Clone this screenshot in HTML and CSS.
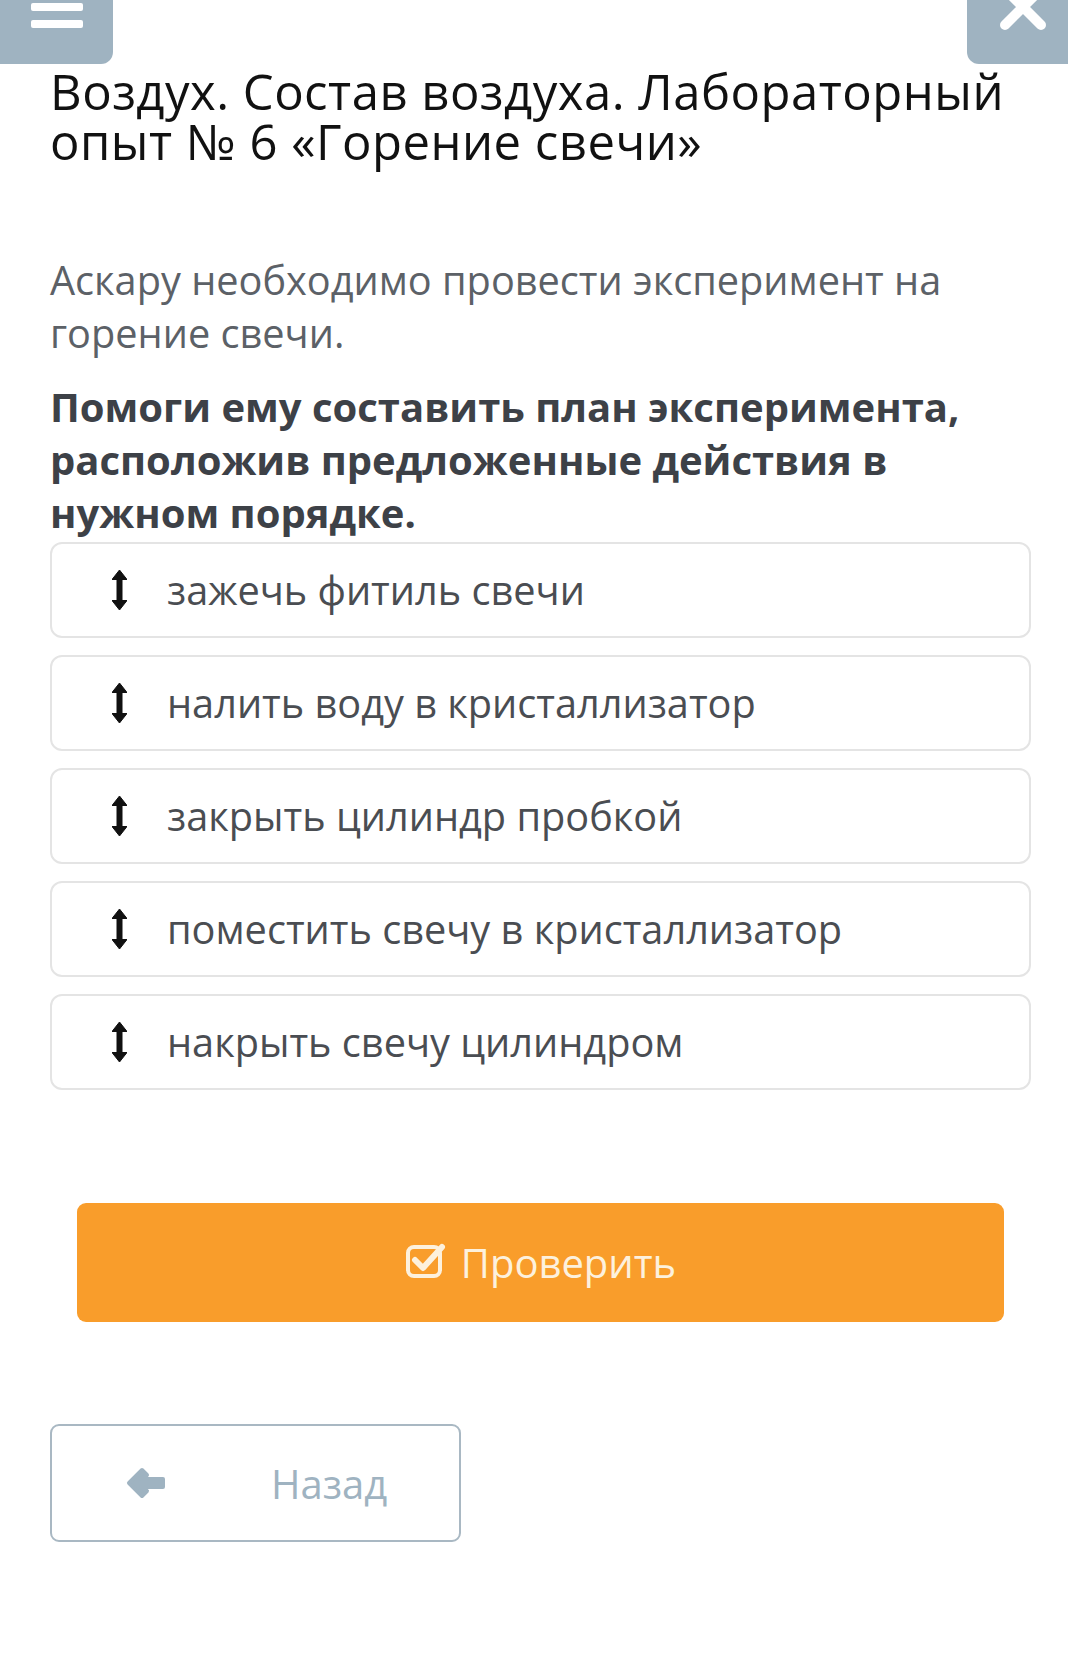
FILE: index.html
```html
<!DOCTYPE html>
<html lang="ru">

<head>
    <meta charset="UTF-8">
    <meta name="viewport" content="width=device-width, initial-scale=1.0">
    <title>Горение свечи</title>
    <link rel="stylesheet" href="styles.css">
</head>

<body>
    <header class="topbar">
        <button class="menu-btn" aria-label="Меню">
            <svg width="52" height="30" viewBox="0 0 52 30">
                <rect x="0" y="2" width="52" height="8" rx="2" fill="#fff" />
                <rect x="0" y="19" width="52" height="8" rx="2" fill="#fff" />
            </svg>
        </button>
        <button class="close-btn" aria-label="Закрыть">
            <svg width="46" height="34" viewBox="0 0 46 34">
                <path d="M5 -11 L41 25 M41 -11 L5 25" stroke="#fff" stroke-width="10" stroke-linecap="round" />
            </svg>
        </button>
    </header>

    <main class="page">
        <h1 class="title">Воздух. Состав воздуха. Лабораторный опыт № 6 «Горение свечи»</h1>

        <p class="task">Аскару необходимо провести эксперимент на горение свечи.</p>
        <p class="task-bold">Помоги ему составить план эксперимента, расположив предложенные действия в нужном порядке.</p>

        <ul class="order-list">
            <li class="order-item">
                <svg class="drag-icon" width="15" height="40" viewBox="0 0 15 40">
                    <path d="M7.5 0 L15 9.5 L10 9.5 L10 30.5 L15 30.5 L7.5 40 L0 30.5 L5 30.5 L5 9.5 L0 9.5 Z" fill="#111" stroke="#111" stroke-width="1" stroke-linejoin="round" />
                </svg>
                <span>зажечь фитиль свечи</span>
            </li>
            <li class="order-item">
                <svg class="drag-icon" width="15" height="40" viewBox="0 0 15 40">
                    <path d="M7.5 0 L15 9.5 L10 9.5 L10 30.5 L15 30.5 L7.5 40 L0 30.5 L5 30.5 L5 9.5 L0 9.5 Z" fill="#111" stroke="#111" stroke-width="1" stroke-linejoin="round" />
                </svg>
                <span>налить воду в кристаллизатор</span>
            </li>
            <li class="order-item">
                <svg class="drag-icon" width="15" height="40" viewBox="0 0 15 40">
                    <path d="M7.5 0 L15 9.5 L10 9.5 L10 30.5 L15 30.5 L7.5 40 L0 30.5 L5 30.5 L5 9.5 L0 9.5 Z" fill="#111" stroke="#111" stroke-width="1" stroke-linejoin="round" />
                </svg>
                <span>закрыть цилиндр пробкой</span>
            </li>
            <li class="order-item">
                <svg class="drag-icon" width="15" height="40" viewBox="0 0 15 40">
                    <path d="M7.5 0 L15 9.5 L10 9.5 L10 30.5 L15 30.5 L7.5 40 L0 30.5 L5 30.5 L5 9.5 L0 9.5 Z" fill="#111" stroke="#111" stroke-width="1" stroke-linejoin="round" />
                </svg>
                <span>поместить свечу в кристаллизатор</span>
            </li>
            <li class="order-item">
                <svg class="drag-icon" width="15" height="40" viewBox="0 0 15 40">
                    <path d="M7.5 0 L15 9.5 L10 9.5 L10 30.5 L15 30.5 L7.5 40 L0 30.5 L5 30.5 L5 9.5 L0 9.5 Z" fill="#111" stroke="#111" stroke-width="1" stroke-linejoin="round" />
                </svg>
                <span>накрыть свечу цилиндром</span>
            </li>
        </ul>

        <div class="check-row">
            <button class="btn-check">
                <svg width="42" height="38" viewBox="0 0 42 38">
                    <rect x="3" y="6" width="32" height="29" rx="6" fill="none" stroke="#fdf1dd" stroke-width="4" />
                    <path d="M10 19 L18 27 L37 6" fill="none" stroke="#fdf1dd" stroke-width="6" stroke-linecap="round" stroke-linejoin="round" />
                </svg>
                <span>Проверить</span>
            </button>
        </div>

        <div class="nav-row">
            <button class="btn-back">
                <svg width="40" height="32" viewBox="0 0 40 32">
                    <path d="M3 16 L16 3 L21 8 L15 12 L37 12 L37 20 L15 20 L21 24 L16 29 Z" fill="#9fb3c1" stroke="#9fb3c1" stroke-width="4" stroke-linejoin="round" />
                </svg>
                <span>Назад</span>
            </button>
        </div>
    </main>
</body>

</html>
```

FILE: styles.css
```css
* {
    margin: 0;
    padding: 0;
    box-sizing: border-box;
}

body {
    background: #fff;
    font-family: 'Open Sans', 'Liberation Sans', sans-serif;
}

/* Top bar (scrolled partly out of view) */
.topbar {
    display: flex;
    justify-content: space-between;
    height: 64px;
}

.menu-btn,
.close-btn {
    border: none;
    background: #9fb3c1;
    height: 64px;
    display: flex;
    justify-content: center;
    align-items: flex-start;
    cursor: pointer;
}

.menu-btn {
    width: 113px;
    border-bottom-right-radius: 12px;
    padding-top: 1px;
}

.close-btn {
    width: 101px;
    border-bottom-left-radius: 12px;
    padding-left: 10px;
}

/* Content */
.page {
    padding: 2px 37px 0 50px;
}

.title {
    font-size: 49px;
    font-weight: 400;
    line-height: 50px;
    letter-spacing: 0.5px;
    color: #111;
}

.task {
    margin-top: 88px;
    font-size: 39.7px;
    line-height: 53px;
    color: #5c6167;
}

.task-bold {
    margin-top: 20px;
    font-size: 40px;
    line-height: 53px;
    font-weight: 700;
    color: #3d4147;
}

.order-list {
    list-style: none;
    margin-top: 3px;
    display: flex;
    flex-direction: column;
    gap: 17px;
}

.order-item {
    height: 96px;
    border: 2px solid #e4e4e4;
    border-radius: 12px;
    display: flex;
    align-items: center;
    padding-left: 60px;
    gap: 40px;
    font-size: 39.7px;
    color: #4a4d52;
}

.drag-icon {
    flex-shrink: 0;
}

.check-row {
    margin-top: 113px;
    padding: 0 27px;
}

.btn-check {
    width: 100%;
    height: 119px;
    border: none;
    border-radius: 9px;
    background: #f99d2b;
    color: #fdf1dd;
    font-family: inherit;
    font-size: 40px;
    display: flex;
    justify-content: center;
    align-items: center;
    gap: 14px;
    cursor: pointer;
}

.btn-check svg {
    margin-top: -5px;
}

.nav-row {
    margin-top: 102px;
}

.btn-back {
    width: 411px;
    height: 118px;
    border: 2px solid #a9b8c3;
    border-radius: 9px;
    background: #fff;
    color: #9fb3c1;
    font-family: inherit;
    font-size: 40px;
    display: flex;
    align-items: center;
    padding-left: 74px;
    gap: 105px;
    cursor: pointer;
}
```
